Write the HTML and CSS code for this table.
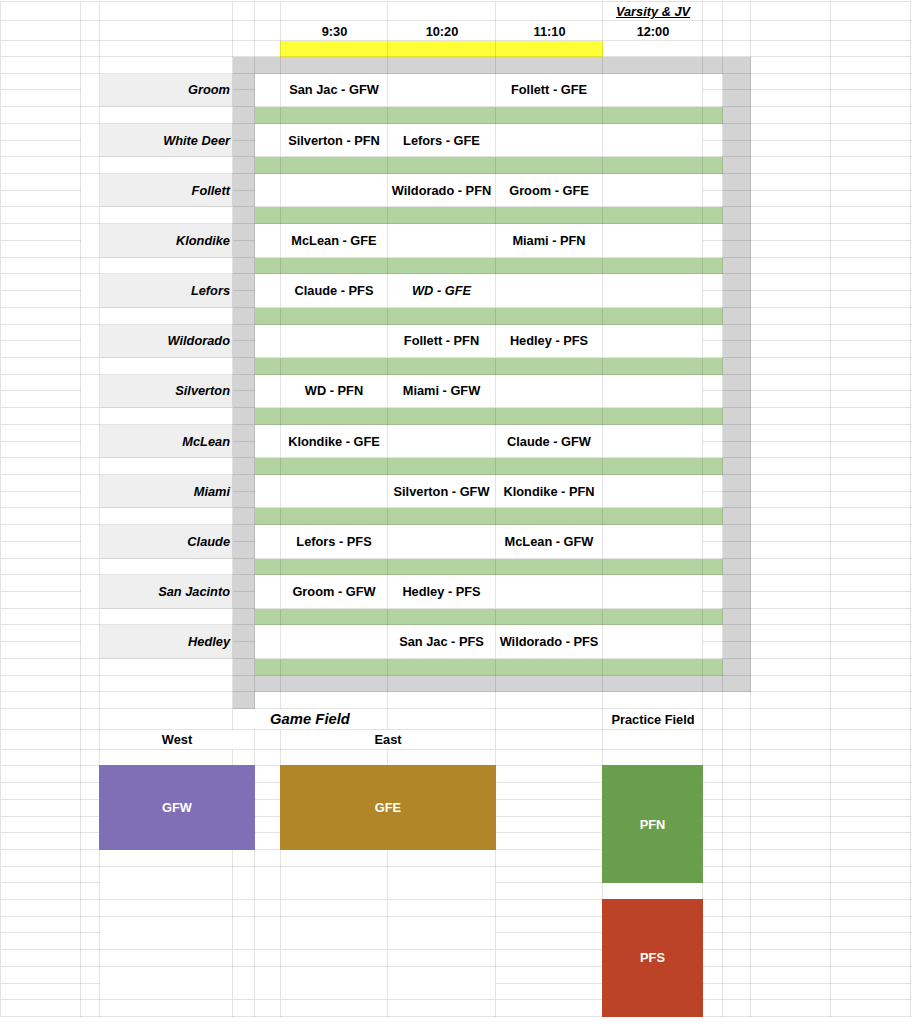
FILE: index.html
```html
<!DOCTYPE html>
<html>
<head>
<meta charset="utf-8">
<title>Schedule</title>
<link rel="stylesheet" href="styles.css">
</head>
<body>
<div class="sheet">
  <div class="fills">
    <div class="fhead">
      <div class="yellow"></div>
      <div class="gray g-toprow"></div>
    </div>
    <div class="fteam"><div class="gray gl"></div><div class="green"></div><div class="gray gr"></div></div>
    <div class="fteam"><div class="gray gl"></div><div class="green"></div><div class="gray gr"></div></div>
    <div class="fteam"><div class="gray gl"></div><div class="green"></div><div class="gray gr"></div></div>
    <div class="fteam"><div class="gray gl"></div><div class="green"></div><div class="gray gr"></div></div>
    <div class="fteam"><div class="gray gl"></div><div class="green"></div><div class="gray gr"></div></div>
    <div class="fteam"><div class="gray gl"></div><div class="green"></div><div class="gray gr"></div></div>
    <div class="fteam"><div class="gray gl"></div><div class="green"></div><div class="gray gr"></div></div>
    <div class="fteam"><div class="gray gl"></div><div class="green"></div><div class="gray gr"></div></div>
    <div class="fteam"><div class="gray gl"></div><div class="green"></div><div class="gray gr"></div></div>
    <div class="fteam"><div class="gray gl"></div><div class="green"></div><div class="gray gr"></div></div>
    <div class="fteam"><div class="gray gl"></div><div class="green"></div><div class="gray gr"></div></div>
    <div class="fteam"><div class="gray gl"></div><div class="green"></div><div class="gray gr"></div></div>
    <div class="ffoot">
      <div class="gray g-botrow"></div>
      <div class="gray g-tail"></div>
    </div>
  </div>
  <div class="vlines">
    <div class="v"></div><div class="v"></div><div class="v"></div><div class="v"></div><div class="v"></div><div class="v"></div><div class="v"></div><div class="v"></div><div class="v"></div><div class="v"></div><div class="v"></div><div class="v"></div><div class="v"></div>
  </div>
  <div class="hlines">
    <div class="h"></div><div class="h"></div><div class="h"></div><div class="h"></div><div class="h"></div><div class="h"></div><div class="h"></div><div class="h"></div><div class="h"></div><div class="h"></div>
    <div class="h"></div><div class="h"></div><div class="h"></div><div class="h"></div><div class="h"></div><div class="h"></div><div class="h"></div><div class="h"></div><div class="h"></div><div class="h"></div>
    <div class="h"></div><div class="h"></div><div class="h"></div><div class="h"></div><div class="h"></div><div class="h"></div><div class="h"></div><div class="h"></div><div class="h"></div><div class="h"></div>
    <div class="h"></div><div class="h"></div><div class="h"></div><div class="h"></div><div class="h"></div><div class="h"></div><div class="h"></div><div class="h"></div><div class="h"></div><div class="h"></div>
    <div class="h"></div><div class="h"></div><div class="h"></div><div class="h"></div><div class="h"></div><div class="h"></div><div class="h"></div><div class="h"></div><div class="h"></div><div class="h"></div>
    <div class="h"></div><div class="h"></div><div class="h"></div><div class="h"></div><div class="h"></div><div class="h"></div><div class="h"></div><div class="h"></div><div class="h"></div><div class="h"></div>
  </div>
  <div class="top">
    <div class="head">
      <div class="txt varsity">Varsity &amp; JV</div>
      <div class="txt time k6">9:30</div>
      <div class="txt time k7">10:20</div>
      <div class="txt time k8">11:10</div>
      <div class="txt time k9">12:00</div>
    </div>

    <div class="team">
      <div class="spc"></div><div class="lbl">Groom</div>
      <div class="cell k5"></div><div class="cell k6">San Jac - GFW</div><div class="cell k7"></div><div class="cell k8">Follett - GFE</div><div class="cell k9"></div>
    </div>
    <div class="team">
      <div class="spc"></div><div class="lbl">White Deer</div>
      <div class="cell k5"></div><div class="cell k6">Silverton - PFN</div><div class="cell k7">Lefors - GFE</div><div class="cell k8"></div><div class="cell k9"></div>
    </div>
    <div class="team">
      <div class="spc"></div><div class="lbl">Follett</div>
      <div class="cell k5"></div><div class="cell k6"></div><div class="cell k7">Wildorado - PFN</div><div class="cell k8">Groom - GFE</div><div class="cell k9"></div>
    </div>
    <div class="team">
      <div class="spc"></div><div class="lbl">Klondike</div>
      <div class="cell k5"></div><div class="cell k6">McLean - GFE</div><div class="cell k7"></div><div class="cell k8">Miami - PFN</div><div class="cell k9"></div>
    </div>
    <div class="team">
      <div class="spc"></div><div class="lbl">Lefors</div>
      <div class="cell k5"></div><div class="cell k6">Claude - PFS</div><div class="cell k7 it">WD - GFE</div><div class="cell k8"></div><div class="cell k9"></div>
    </div>
    <div class="team">
      <div class="spc"></div><div class="lbl">Wildorado</div>
      <div class="cell k5"></div><div class="cell k6"></div><div class="cell k7">Follett - PFN</div><div class="cell k8">Hedley - PFS</div><div class="cell k9"></div>
    </div>
    <div class="team">
      <div class="spc"></div><div class="lbl">Silverton</div>
      <div class="cell k5"></div><div class="cell k6">WD - PFN</div><div class="cell k7">Miami - GFW</div><div class="cell k8"></div><div class="cell k9"></div>
    </div>
    <div class="team">
      <div class="spc"></div><div class="lbl">McLean</div>
      <div class="cell k5"></div><div class="cell k6">Klondike - GFE</div><div class="cell k7"></div><div class="cell k8">Claude - GFW</div><div class="cell k9"></div>
    </div>
    <div class="team">
      <div class="spc"></div><div class="lbl">Miami</div>
      <div class="cell k5"></div><div class="cell k6"></div><div class="cell k7">Silverton - GFW</div><div class="cell k8">Klondike - PFN</div><div class="cell k9"></div>
    </div>
    <div class="team">
      <div class="spc"></div><div class="lbl">Claude</div>
      <div class="cell k5"></div><div class="cell k6">Lefors - PFS</div><div class="cell k7"></div><div class="cell k8">McLean - GFW</div><div class="cell k9"></div>
    </div>
    <div class="team">
      <div class="spc"></div><div class="lbl">San Jacinto</div>
      <div class="cell k5"></div><div class="cell k6">Groom - GFW</div><div class="cell k7">Hedley - PFS</div><div class="cell k8"></div><div class="cell k9"></div>
    </div>
    <div class="team">
      <div class="spc"></div><div class="lbl">Hedley</div>
      <div class="cell k5"></div><div class="cell k6"></div><div class="cell k7">San Jac - PFS</div><div class="cell k8">Wildorado - PFS</div><div class="cell k9"></div>
    </div>

    <div class="foot">
      <div class="cell gamefield">Game Field</div>
      <div class="txt practice">Practice Field</div>
      <div class="cell west">West</div>
      <div class="cell east">East</div>
      <div class="blk gfw">GFW</div>
      <div class="blk gfe">GFE</div>
      <div class="blk pfn">PFN</div>
      <div class="blk pfs">PFS</div>
      <div class="pairs p1"><div class="cell"></div><div class="cell"></div><div class="cell"></div><div class="cell"></div><div class="cell"></div></div>
      <div class="pairs p2"><div class="cell"></div><div class="cell"></div><div class="cell"></div><div class="cell"></div><div class="cell"></div></div>
      <div class="pairs p3"><div class="cell"></div><div class="cell"></div><div class="cell"></div><div class="cell"></div><div class="cell"></div></div>
    </div>
  </div>
</div>
</body>
</html>
```

FILE: styles.css
```css
* { box-sizing: border-box; }

html, body {
  margin: 0;
  padding: 0;
  background: #ffffff;
}

body {
  font-family: "Liberation Sans", Arial, sans-serif;
  font-size: 12.8px;
  font-weight: bold;
  color: #000;
}

.sheet {
  --line: rgba(0, 0, 0, 0.11);
  --cols: 80px 19px 133px 22px 26px 107px 108px 107px 100px 20px 28px 80px 80px;
  --row: 16.72px;
  --head-rows: 19px 20px 16px 16.72px;
  --foot-rows: 16.72px 16.72px 21.4px 19.3px 16.7px repeat(15, 16.71px);
  --rows: 19px 20px 16px repeat(39, 16.72px) 21.4px 19.3px 16.7px repeat(15, 16.71px);
  display: grid;
  width: max-content;
  margin-top: 1px;
  border-left: 1px solid var(--line);
  border-top: 1px solid var(--line);
}

.sheet > * {
  grid-area: 1 / 1;
}

/* ---------- fills under the gridlines ---------- */
.fills {
  display: flex;
  flex-direction: column;
}

.fhead {
  display: grid;
  grid-template-columns: var(--cols);
  grid-template-rows: var(--head-rows);
}

.fteam {
  display: grid;
  grid-template-columns: var(--cols);
  grid-template-rows: repeat(3, var(--row));
}

.ffoot {
  display: grid;
  grid-template-columns: var(--cols);
  grid-template-rows: var(--foot-rows);
}

.gray { background: #d3d3d3; }

.yellow {
  grid-column: 6 / 9;
  grid-row: 3;
  background: #ffff38;
  margin-left: -1px;
}

.g-toprow { grid-column: 4 / 12; grid-row: 4; }
.gl { grid-column: 4; grid-row: 1 / 4; }
.gr { grid-column: 11; grid-row: 1 / 4; }
.green {
  grid-column: 5 / 11;
  grid-row: 3;
  background: #b3d3a1;
}
.g-botrow { grid-column: 4 / 12; grid-row: 1; }
.g-tail { grid-column: 4; grid-row: 2; }

/* ---------- gridlines ---------- */
.vlines {
  display: grid;
  grid-template-columns: var(--cols);
}

.v {
  border-right: 1px solid var(--line);
}

.hlines {
  display: grid;
  grid-template-rows: var(--rows);
}

.h {
  border-bottom: 1px solid var(--line);
}

/* ---------- content layer ---------- */
.top {
  display: flex;
  flex-direction: column;
}

.head {
  display: grid;
  grid-template-columns: var(--cols);
  grid-template-rows: var(--head-rows);
}

.txt {
  display: flex;
  align-items: center;
  justify-content: center;
  white-space: nowrap;
}

.varsity {
  grid-column: 9;
  grid-row: 1;
  font-style: italic;
  text-decoration: underline;
}

.time {
  grid-row: 2;
}

.k5 { grid-column: 5; }
.k6 { grid-column: 6; }
.k7 { grid-column: 7; }
.k8 { grid-column: 8; }
.k9 { grid-column: 9; }

.team {
  display: grid;
  grid-template-columns: var(--cols);
  grid-template-rows: repeat(3, var(--row));
}

.cell {
  background: #ffffff;
  border-right: 1px solid var(--line);
  border-bottom: 1px solid var(--line);
  display: flex;
  align-items: center;
  justify-content: center;
  white-space: nowrap;
}

.team > .cell {
  grid-row: 1 / 3;
}

.spc {
  grid-column: 2;
  grid-row: 1 / 3;
  background: #ffffff;
  border-right: 1px solid var(--line);
  border-bottom: 1px solid var(--line);
}

.lbl {
  grid-column: 3;
  grid-row: 1 / 3;
  background: #efefef;
  border-right: 1px solid var(--line);
  border-bottom: 1px solid var(--line);
  display: flex;
  align-items: center;
  justify-content: flex-end;
  padding-right: 2px;
  font-style: italic;
  white-space: nowrap;
}

.it {
  font-style: italic;
}

.foot {
  display: grid;
  grid-template-columns: var(--cols);
  grid-template-rows: var(--foot-rows);
}

.gamefield {
  grid-column: 4 / 7;
  grid-row: 3;
  font-style: italic;
  font-size: 14.8px;
}

.practice {
  grid-column: 9;
  grid-row: 3;
}

.west {
  grid-column: 3 / 5;
  grid-row: 4;
}

.east {
  grid-column: 6 / 8;
  grid-row: 4;
}

.blk {
  display: flex;
  align-items: center;
  justify-content: center;
  color: #ffffff;
  margin: -1px 0 0 -1px;
}

.gfw {
  grid-column: 3 / 5;
  grid-row: 6 / 11;
  background: #806eb6;
}

.gfe {
  grid-column: 6 / 8;
  grid-row: 6 / 11;
  background: #b08628;
}

.pfn {
  grid-column: 9;
  grid-row: 6 / 13;
  background: #699e4c;
}

.pfs {
  grid-column: 9;
  grid-row: 14 / 21;
  background: #bc4328;
}

.pairs {
  grid-column: 3 / 8;
  display: grid;
  grid-template-columns: 133px 22px 26px 107px 108px;
}

.p1 { grid-row: 12 / 14; }
.p2 { grid-row: 15 / 17; }
.p3 { grid-row: 18 / 20; }
```
